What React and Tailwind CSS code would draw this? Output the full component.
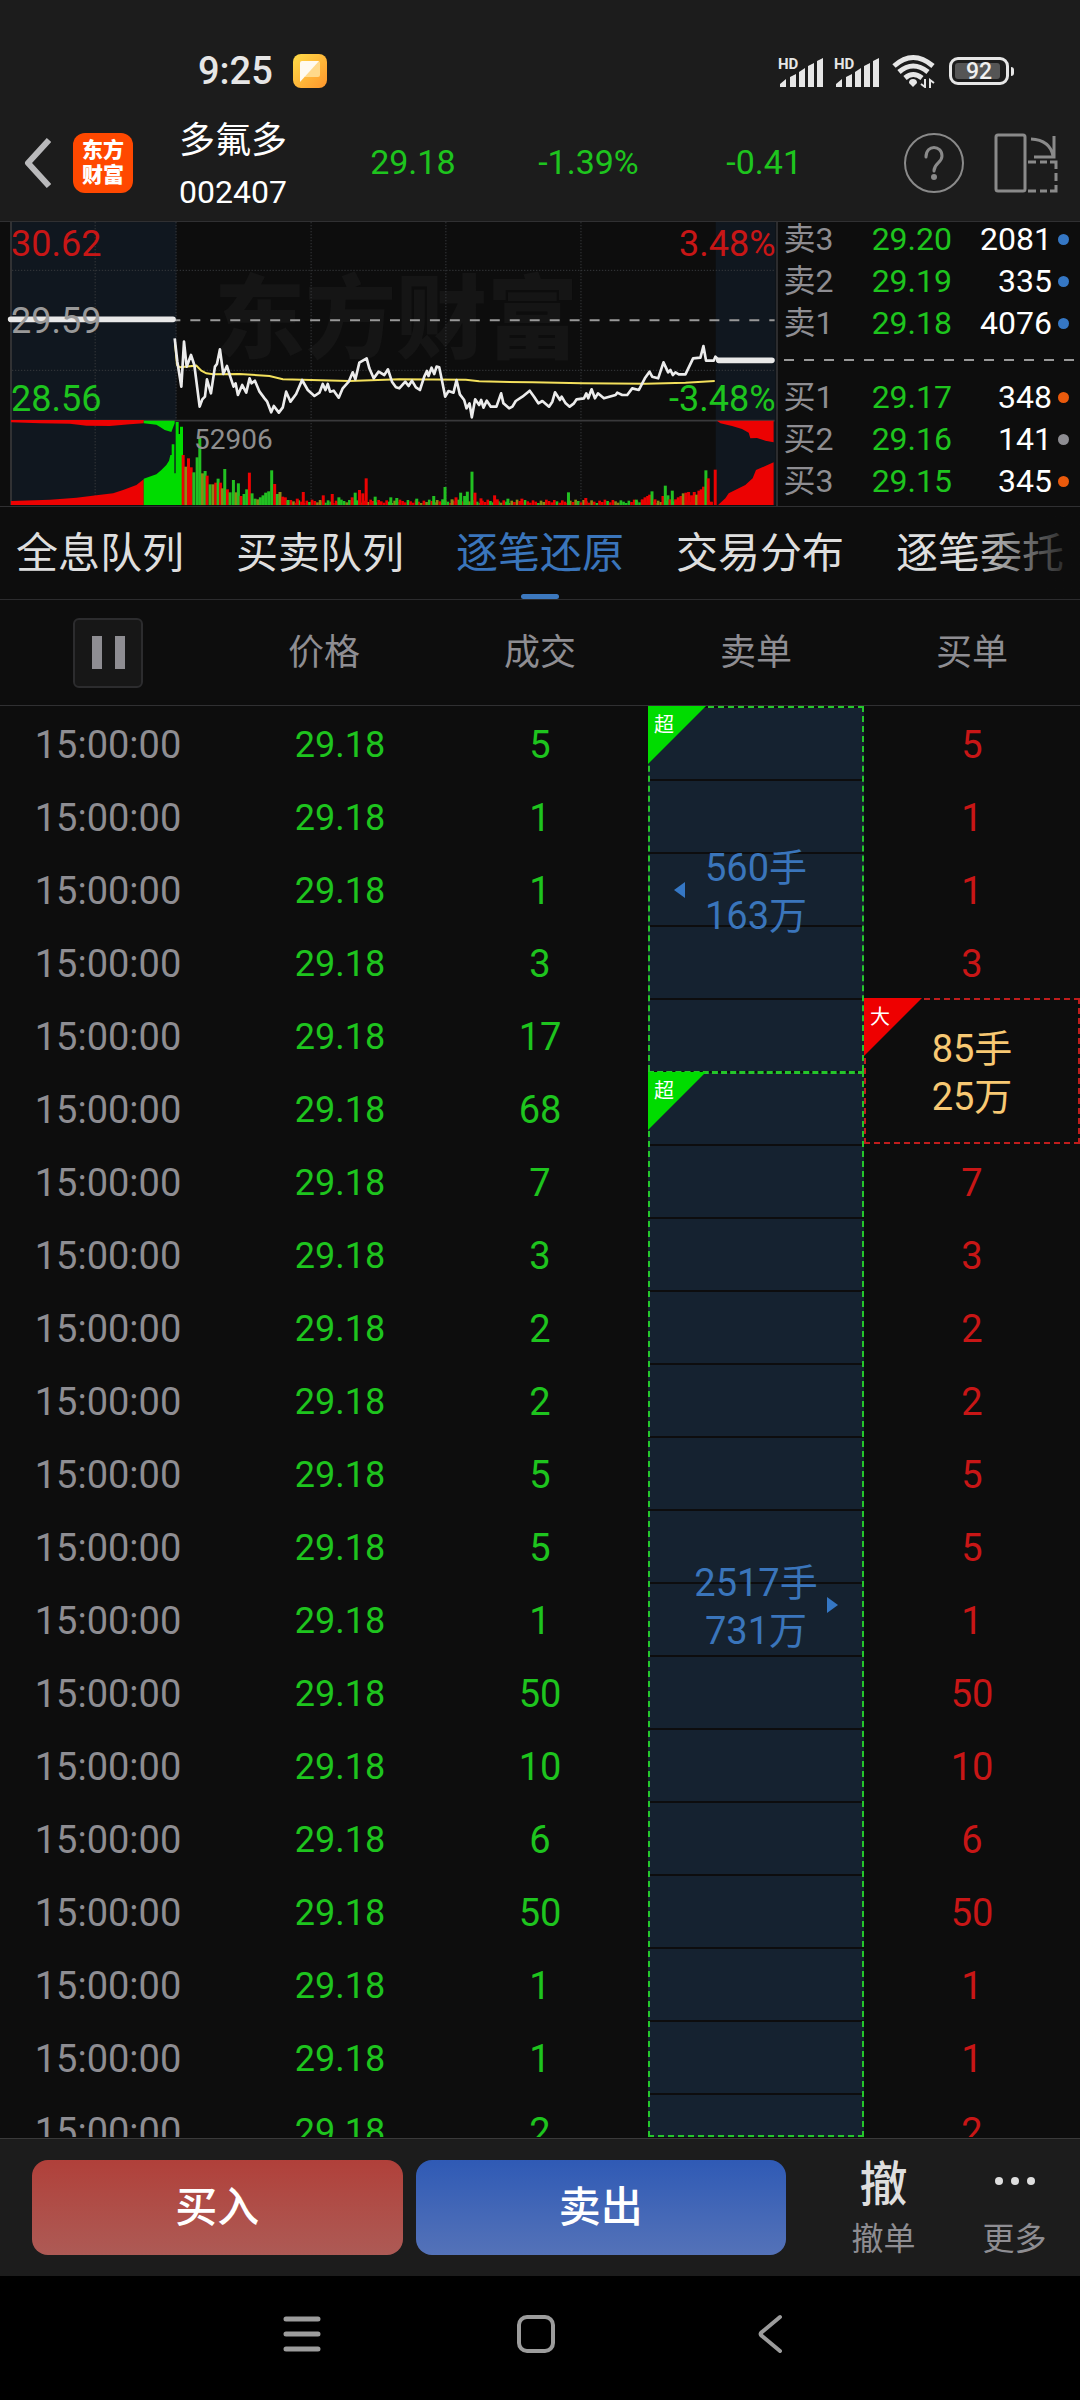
import React, { useState } from 'react';

const satislar = [
  { ad: "卖3", fiyat: "29.20", adet: 2081, nokta: "bg-[#3577c4]" },
  { ad: "卖2", fiyat: "29.19", adet: 335, nokta: "bg-[#3577c4]" },
  { ad: "卖1", fiyat: "29.18", adet: 4076, nokta: "bg-[#3577c4]" },
];

const alislar = [
  { ad: "买1", fiyat: "29.17", adet: 348, nokta: "bg-[#ea5a0c]" },
  { ad: "买2", fiyat: "29.16", adet: 141, nokta: "bg-[#8e8d92]" },
  { ad: "买3", fiyat: "29.15", adet: 345, nokta: "bg-[#ea5a0c]" },
];

const sekmeler = ["全息队列", "买卖队列", "逐笔还原", "交易分布", "逐笔委托"];

const islemler = [5, 1, 1, 3, 17, 68, 7, 3, 2, 2, 5, 5, 1, 50, 10, 6, 50, 1, 1, 2];

// Birden fazla satıra yayılan büyük emirler (başlangıç satırına göre)
const satisBloklari = {
  0: { satir: 5, el: "560手", tutar: "163万", yon: "sol" },
  5: { satir: 15, el: "2517手", tutar: "731万", yon: "sag" },
};
const alisBloklari = {
  4: { satir: 2, el: "85手", tutar: "25万" },
};

const fiyatCizgisi =
  "525,385 533,455 545,530 553,395 561,470 574,435 584,465 600,590 608,568 616,560 622,508 634,550 646,470 652,462 661,418 671,492 682,468 692,500 702,530 708,520 715,555 728,525 740,548 750,505 756,520 766,512 780,545 795,565 803,575 815,607 823,588 838,608 850,592 860,545 873,575 890,552 908,510 925,540 945,558 960,548 970,522 978,540 985,522 992,545 1003,542 1018,563 1030,535 1048,515 1060,487 1068,508 1080,458 1102,445 1110,475 1123,505 1138,485 1155,495 1166,478 1178,515 1190,532 1200,535 1218,515 1228,528 1238,512 1250,532 1262,540 1275,500 1283,483 1288,498 1297,473 1305,492 1312,470 1320,472 1328,510 1338,560 1348,543 1363,548 1372,510 1382,553 1395,570 1402,595 1411,580 1418,622 1428,568 1440,585 1446,570 1453,593 1463,572 1475,590 1492,590 1506,550 1513,580 1530,595 1540,590 1550,573 1570,560 1592,542 1605,560 1618,580 1630,573 1650,590 1660,575 1668,547 1683,570 1688,560 1700,580 1712,590 1725,580 1733,568 1755,565 1762,550 1768,565 1778,538 1788,565 1797,550 1815,565 1850,555 1855,548 1870,555 1885,555 1900,535 1920,540 1938,505 1952,485 1960,500 1978,505 1994,457 2008,487 2015,480 2022,495 2030,487 2040,493 2060,493 2083,445 2105,443 2114,408 2122,452 2145,452 2150,440 2160,450";

const ortalamaCizgisi =
  "526,400 532,465 540,472 590,467 605,482 620,490 640,493 720,492 810,498 850,508 1050,513 1200,508 1400,509 1440,514 1600,517 1750,520 1940,521 2060,518 2148,513";

const K = "#ec0202";
const Y = "#22c022";
const Z = "#8a8a14";

// [x, tepe, renk]
const hacimler = [
  [550, 735, K], [558, 770, Z], [566, 745, K], [574, 772, K], [582, 787, Y], [592, 742, Y], [600, 683, Y], [608, 790, Z],
  [616, 783, Y], [622, 797, K], [631, 823, Y], [640, 823, Z], [648, 818, K], [655, 806, Y], [662, 818, K], [668, 835, Z],
  [675, 777, Y], [683, 838, K], [691, 847, Y], [701, 810, Y], [709, 847, Z], [716, 820, Y], [724, 858, K], [733, 852, Y],
  [741, 838, Y], [749, 788, K], [757, 850, Y], [766, 866, Y], [774, 868, Z], [782, 862, Y], [790, 856, Y], [798, 848, Y],
  [807, 844, Y], [816, 781, Y], [825, 822, K], [833, 852, Y], [841, 846, Z], [849, 860, K], [857, 862, K], [865, 870, Y],
  [893, 866, K], [911, 846, K], [971, 856, K], [998, 852, K], [1018, 862, Y], [1058, 862, K], [1067, 848, Y], [1080, 840, K],
  [1090, 850, K], [1100, 805, K], [1127, 860, Y], [1174, 862, Y], [1192, 864, Y], [1252, 866, Y], [1303, 858, Y], [1330, 868, Y],
  [1337, 831, Y], [1358, 868, Z], [1370, 862, K], [1384, 848, Y], [1396, 858, Y], [1404, 845, Y], [1418, 785, Y], [1427, 848, K],
  [1445, 865, K], [1486, 856, K], [1494, 868, K], [1526, 866, Y], [1568, 866, K], [1708, 847, Y], [1760, 864, K], [1912, 869, Y],
  [1930, 868, K], [1938, 862, K], [1946, 858, K], [1952, 854, K], [1959, 844, Y], [1968, 868, K], [1992, 858, K], [1999, 827, Y],
  [2007, 856, Y], [2013, 868, K], [2020, 842, Y], [2030, 868, K], [2038, 862, K], [2046, 858, K], [2053, 850, Z], [2061, 848, K],
  [2069, 846, K], [2078, 856, K], [2086, 846, K], [2093, 854, Z], [2100, 842, K], [2107, 838, K], [2114, 830, K], [2121, 781, Y],
  [2128, 805, K], [2137, 876, K], [2149, 779, K],
];

// Seans ortasındaki düşük hacimli çubuklar
const dusukHacimler = Array.from({ length: 162 }, (_, i) => [
  850 + i * 8,
  869 + ((i * 37) % 11),
  [K, K, Z, K, Y, K, Z, Y][(i * 5 + ((i * i) % 7)) % 8],
]);

function Grafik() {
  return (
    <div className="relative flex-1 min-w-0 h-[284px] overflow-hidden border-r-2 border-[#2c2c2e]">
      <svg className="absolute inset-0 w-full h-full" viewBox="0 36 2331 852" preserveAspectRatio="none" aria-hidden="true">
        <rect x="33" y="36" width="497" height="850" fill="#10171f" />
        <rect x="2151" y="36" width="180" height="850" fill="#10171f" />
      </svg>
      <div className="absolute left-[214px] top-[38px] text-[91px] leading-[120px] font-black text-[#151515] whitespace-nowrap">东方财富</div>
      <svg className="absolute inset-0 w-full h-full" viewBox="0 36 2331 852" preserveAspectRatio="none" aria-hidden="true">
        <g stroke="#36383b" strokeWidth="3" strokeDasharray="4 5">
          <path d="M286 36V885M529 36V632M935 36V885M1340 36V885M1746 36V885" />
          <path d="M36 181H2328M36 481H2328" />
        </g>
        <path d="M33 36V885M33 632H2328" stroke="#39393b" strokeWidth="5" fill="none" />
        <path d="M512 331H2328" stroke="#999" strokeWidth="6" strokeDasharray="30 30" />

        <polygon fill={K} points="33,630 432,630 432,640 390,643 330,648 260,647 210,641 120,640 33,637" />
        <polygon fill="#00dc00" points="432,632 525,632 525,640 515,666 495,660 480,650 470,644 432,640" />
        <polygon fill={K} points="33,885 33,873 150,869 230,863 290,856 340,850 370,840 410,825 432,808 432,885" />
        <polygon fill="#00dc00" points="432,885 432,806 470,793 485,780 500,765 508,752 512,735 516,735 516,703 524,703 524,790 528,790 528,636 537,636 537,672 541,672 541,650 550,650 550,885" />
        {dusukHacimler.map(([x, tepe, renk], i) => (
          <rect key={i} x={x - 4} y={tepe} width="8" height={885 - tepe} fill={renk} />
        ))}
        {hacimler.map(([x, tepe, renk], i) => (
          <rect key={i} x={x - 4} y={tepe} width="9" height={885 - tepe} fill={renk} />
        ))}
        <polygon fill={K} points="2155,632 2165,640 2200,648 2230,657 2250,668 2255,685 2275,684 2300,692 2325,697 2325,632" />
        <polygon fill={K} points="2158,885 2180,865 2190,850 2240,825 2262,805 2272,780 2300,768 2325,757 2325,885" />

        <polyline points={ortalamaCizgisi} fill="none" stroke="#f3e05c" strokeWidth="6" />
        <polyline points={fiyatCizgisi} fill="none" stroke="#ececec" strokeWidth="8" strokeLinejoin="round" />
        <path d="M32 328H520M2160 451H2320" stroke="#e8e8e8" strokeWidth="17" strokeLinecap="round" />
      </svg>
      <span className="absolute left-[11px] top-[2px] text-[36px] leading-[40px] text-[#c81616]">30.62</span>
      <span className="absolute left-[11px] top-[79px] text-[36px] leading-[40px] text-[#999]">29.59</span>
      <span className="absolute left-[11px] top-[157px] text-[36px] leading-[40px] text-[#1ec41e]">28.56</span>
      <span className="absolute right-0 top-[2px] text-[36px] leading-[40px] text-[#c81616]">3.48%</span>
      <span className="absolute right-0 top-[157px] text-[36px] leading-[40px] text-[#1ec41e]">-3.48%</span>
      <span className="absolute left-[194px] top-[198px] text-[28px] leading-[40px] text-[#8e8e8e]">52906</span>
    </div>
  );
}

function Kademe({ ad, fiyat, adet, nokta }) {
  return (
    <li className="flex items-center h-[42px] pl-[6px] pr-[11px] text-[32px] leading-[34px]">
      <span className="w-[54px] text-[#8e8d92] whitespace-nowrap">{ad}</span>
      <span className="flex-1 text-right text-[#1ec41e]">{fiyat}</span>
      <span className="w-[100px] text-right text-white">{adet}</span>
      <span className={`w-[11px] h-[11px] ml-[6px] rounded-full ${nokta}`}></span>
    </li>
  );
}

function Rozet({ renk, children }) {
  return (
    <div className="absolute -left-0.5 -top-0.5">
      <svg width="58" height="58" viewBox="0 0 58 58" className="block" aria-hidden="true">
        <path d="M0 0H58L0 58Z" fill={renk} />
      </svg>
      <span className="absolute left-[6px] top-[6px] text-[20px] leading-[26px] text-white">{children}</span>
    </div>
  );
}

function SatisBlogu({ blok, ilk }) {
  return (
    <td
      rowSpan={blok.satir}
      className={`relative p-0 pt-1 text-center text-[#3a75bb] leading-[48px] border-x-2 border-dashed border-[#25c62b] bg-origin-border bg-[repeating-linear-gradient(to_bottom,#0d0d0e_0px,#0d0d0e_2px,#152230_2px,#152230_73px)] ${ilk ? "border-t-2" : "border-t-3 border-b-2"}`}
    >
      <Rozet renk="#00dc00">超</Rozet>
      <div>{blok.el}</div>
      <div>{blok.tutar}</div>
      {blok.yon === "sol" ? (
        <svg className="absolute left-[24px] top-1/2 -translate-y-1/2" width="11" height="16" viewBox="0 0 11 16"><path d="M11 0V16L0 8Z" fill="#3577c4" /></svg>
      ) : (
        <svg className="absolute right-[24px] top-1/2 -translate-y-1/2" width="11" height="16" viewBox="0 0 11 16"><path d="M0 0V16L11 8Z" fill="#3577c4" /></svg>
      )}
    </td>
  );
}

function AlisBlogu({ blok }) {
  return (
    <td rowSpan={blok.satir} className="relative p-0 pt-1 text-center text-[#f7c873] leading-[48px] border-2 border-dashed border-[#c01c1c]">
      <Rozet renk="#ee0000">大</Rozet>
      <div>{blok.el}</div>
      <div>{blok.tutar}</div>
    </td>
  );
}

function Sinyal() {
  return (
    <svg width="46" height="34" viewBox="0 0 46 34" fill="#e6e6e6" aria-hidden="true">
      <text x="0" y="15" fontSize="15" fontWeight="700">HD</text>
      <path d="M2 33V30L8 25V33ZM12 33V23L18 20V33ZM21 33V18L27 14V33ZM30 33V12L36 9V33ZM39 33V7L45 4V33Z" />
    </svg>
  );
}

function DurumCubugu() {
  return (
    <div className="flex items-center h-[104px] pt-[38px] pl-[198px] pr-[66px]">
      <span className="text-[38px] leading-[44px] font-medium text-[#e6e6e6]">9:25</span>
      <svg className="ml-5" width="34" height="34" viewBox="0 0 34 34" aria-hidden="true">
        <defs>
          <linearGradient id="sari" x1="0" y1="0" x2="1" y2="1">
            <stop offset="0" stopColor="#ffdc48" />
            <stop offset="1" stopColor="#ff962c" />
          </linearGradient>
        </defs>
        <rect width="34" height="34" rx="8" fill="url(#sari)" />
        <path d="M9 7H25Q27 7 27 9V21Q27 23 25 23H12Z" fill="#ffd98a" />
        <path d="M9 7H26L7 28V9Q7 7 9 7Z" fill="#fffaf0" />
      </svg>
      <div className="flex items-center ml-auto">
        <Sinyal />
        <span className="w-[10px]"></span>
        <Sinyal />
        <svg className="ml-[12px]" width="43" height="34" viewBox="0 0 43 34" fill="none" stroke="#e6e6e6" strokeWidth="5" aria-hidden="true">
          <path d="M2 12Q21 -5 41 12M7 18Q21 6 36 18M13 24Q21 17 30 24" />
          <path d="M21 25A4 4 0 0 1 25 29L21 33L17 29A4 4 0 0 1 21 25Z" fill="#e6e6e6" stroke="none" />
          <path d="M33 25V33L29 30M38 34V26L42 29" strokeWidth="2" />
        </svg>
        <div className="relative ml-[14px] w-[60px] h-[28px] rounded-[9px] border-[3px] border-[#e6e6e6] p-[3px]">
          <div className="h-full w-[45px] rounded-[3px] bg-[#555]"></div>
          <span className="absolute inset-0 text-center text-[23px] leading-[23px] font-medium text-[#f0f0f0]">92</span>
        </div>
        <span className="w-[3px] h-[9px] ml-[2px] rounded-r bg-[#e6e6e6]"></span>
      </div>
    </div>
  );
}

function Baslik() {
  return (
    <header className="flex items-center h-[117px] pl-6 pr-[22px]">
      <button aria-label="返回">
        <svg width="27" height="50" viewBox="0 0 27 50" fill="none" stroke="#b9b9bb" strokeWidth="6" strokeLinejoin="round"><path d="M25 2L4 25L25 48" /></svg>
      </button>
      <div className="flex flex-col justify-center items-center w-[60px] h-[60px] ml-[22px] rounded-[12px] bg-[#ff4800] text-white text-[21px] leading-[25px] font-black">
        <span>东方</span>
        <span>财富</span>
      </div>
      <div className="ml-[46px] mt-2 w-[108px] text-white whitespace-nowrap">
        <h1 className="text-[36px] leading-[51px]">多氟多</h1>
        <div className="text-[32px] leading-[51px]">002407</div>
      </div>
      <div className="flex-1 grid grid-cols-3 ml-[38px] text-center text-[34px] text-[#1ec41e]">
        <span>29.18</span>
        <span>-1.39%</span>
        <span>-0.41</span>
      </div>
      <button aria-label="帮助" className="ml-[52px]">
        <svg width="60" height="62" viewBox="0 0 60 62" fill="none" stroke="#8a8a8a" strokeWidth="2">
          <circle cx="30" cy="31" r="29" />
          <path d="M22 25C22 12 38 13 38 24C38 31 30 31 30 39" strokeWidth="3" strokeLinecap="round" />
          <circle cx="30" cy="45" r="3" fill="#8a8a8a" stroke="none" />
        </svg>
      </button>
      <button aria-label="横屏" className="ml-[30px]">
        <svg width="64" height="60" viewBox="0 0 64 60" fill="none" stroke="#8a8a8a" strokeWidth="3">
          <rect x="2" y="2" width="29" height="56" rx="2" />
          <path d="M37 6Q56 7 59 23M60 3V24H40" />
          <path d="M34 29H42M46 29H53M56 29H62V36M62 40V48M62 52V58H56M53 58H46M42 58H34" />
        </svg>
      </button>
    </header>
  );
}

export default function App() {
  const [aktif, setAktif] = useState("逐笔还原");

  return (
    <div className="flex flex-col min-h-screen bg-black font-[Roboto,'Noto_Sans_CJK_SC',sans-serif] overflow-x-hidden">
      <div className="bg-[#1c1c1c]">
        <DurumCubugu />
        <Baslik />
      </div>

      <main className="flex-1 bg-[#0d0d0d]">
        <section className="flex border-y border-[#303032]">
          <Grafik />
          <div className="w-[28%] h-[284px] overflow-hidden">
            <ul className="-mt-1">
              {satislar.map((k) => <Kademe key={k.ad} {...k} />)}
            </ul>
            <div className="flex items-center h-8 pl-[6px] pr-[5px]">
              <svg className="w-full h-[2px]"><path d="M0 1H400" stroke="#999" strokeWidth="2" strokeDasharray="10 10" /></svg>
            </div>
            <ul>
              {alislar.map((k) => <Kademe key={k.ad} {...k} />)}
            </ul>
          </div>
        </section>

        <nav className="relative flex justify-between h-[93px] px-4 border-b border-[#2c2c2e]">
          {sekmeler.map((s) => (
            <button key={s} onClick={() => setAktif(s)} className={`relative text-[42px] whitespace-nowrap ${aktif === s ? "text-[#3a75bb]" : "text-[#dedede]"}`}>
              {s}
              {aktif === s && <span className="absolute bottom-0 left-1/2 -translate-x-1/2 w-[38px] h-[5px] rounded-full bg-[#3c78be]"></span>}
            </button>
          ))}
          <div className="absolute right-0 top-0 w-[110px] h-[91px] pointer-events-none bg-linear-to-r from-transparent to-[#0d0d0d]"></div>
        </nav>

        <table className="w-full table-fixed border-separate border-spacing-0 text-[38px] text-center">
          <thead>
            <tr className="h-[106px] text-[36px] text-[#8e8d92]">
              <th className="p-0 border-b border-[#303032]">
                <button aria-label="暂停" className="inline-flex items-center justify-center gap-[13px] w-[70px] h-[70px] align-middle rounded-[6px] border-2 border-[#2c2c2e] bg-[#171717]">
                  <span className="w-[10px] h-[33px] bg-[#8e8d92]"></span>
                  <span className="w-[10px] h-[33px] bg-[#8e8d92]"></span>
                </button>
              </th>
              {["价格", "成交", "卖单", "买单"].map((b) => (
                <th key={b} className="p-0 font-normal border-b border-[#303032]">{b}</th>
              ))}
            </tr>
          </thead>
          <tbody className="leading-[78px]">
            {islemler.map((adet, i) => {
              const satis = satisBloklari[i];
              const alis = alisBloklari[i];
              const yukseklik = i === islemler.length - 1 ? "h-[44px] overflow-hidden" : "h-[73px]";
              return (
                <tr key={i}>
                  <td className="p-0 text-[#8e8d92]"><div className={yukseklik}>15:00:00</div></td>
                  <td className="p-0 pl-8 text-[36px] text-[#1ec41e]"><div className={yukseklik}>29.18</div></td>
                  <td className="p-0 text-[#1ec41e]"><div className={yukseklik}>{adet}</div></td>
                  {satis && <SatisBlogu blok={satis} ilk={i === 0} />}
                  {alis && <AlisBlogu blok={alis} />}
                  {i !== 4 && i !== 5 && (
                    <td className="p-0 text-[#c81616]"><div className={yukseklik}>{adet}</div></td>
                  )}
                </tr>
              );
            })}
          </tbody>
        </table>
      </main>

      <footer>
        <div className="flex items-center h-[138px] pl-8 bg-[#1c1c1c] border-t border-[#3a3a3a]">
          <div className="flex flex-1 gap-[13px] text-white text-[42px] font-medium">
            <button className="flex-1 h-[95px] rounded-[16px] bg-linear-to-b from-[#b0403a] to-[#ad5a55]">买入</button>
            <button className="flex-1 h-[95px] rounded-[16px] bg-linear-to-b from-[#2f5ab5] to-[#5472b8]">卖出</button>
          </div>
          <div className="grid grid-cols-2 w-[262px] ml-8 pt-2 text-[32px] text-[#8e8d92]">
            <button className="flex flex-col items-center">
              <span className="text-[48px] leading-[54px] font-medium text-[#dedede]">撤</span>
              <span className="leading-[54px]">撤单</span>
            </button>
            <button className="flex flex-col items-center">
              <span className="flex items-center gap-2 h-[54px] pb-2">
                <i className="w-2 h-2 rounded-full bg-[#dedede]"></i>
                <i className="w-2 h-2 rounded-full bg-[#dedede]"></i>
                <i className="w-2 h-2 rounded-full bg-[#dedede]"></i>
              </span>
              <span className="leading-[54px]">更多</span>
            </button>
          </div>
        </div>
        <div className="flex justify-center items-center gap-[194px] h-[124px] pb-2 pr-2">
          <button aria-label="菜单">
            <svg width="40" height="40" viewBox="0 0 40 40" stroke="#9c9c9c" strokeWidth="5" strokeLinecap="round"><path d="M4 5H36M4 20H36M4 35H36" /></svg>
          </button>
          <button aria-label="主页">
            <svg width="40" height="40" viewBox="0 0 40 40" fill="none" stroke="#9c9c9c" strokeWidth="4"><rect x="3" y="3" width="34" height="34" rx="8" /></svg>
          </button>
          <button aria-label="后退">
            <svg width="40" height="40" viewBox="0 0 40 40" fill="none" stroke="#9c9c9c" strokeWidth="4" strokeLinecap="round" strokeLinejoin="round"><path d="M30 3L12 18Q9 20 12 22L30 37" /></svg>
          </button>
        </div>
      </footer>
    </div>
  );
}
